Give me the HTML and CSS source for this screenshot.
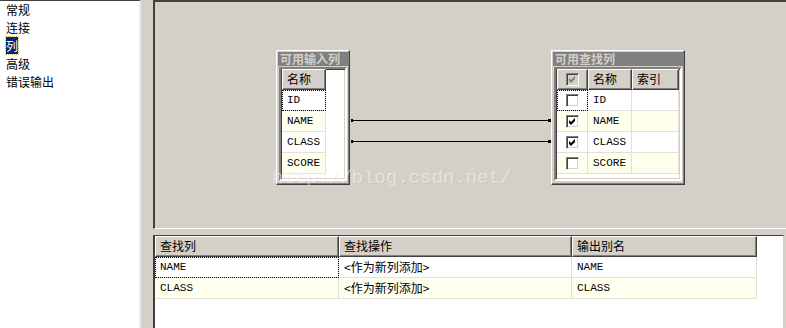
FILE: index.html
```html
<!DOCTYPE html>
<html lang="zh-CN">

<head>
    <meta charset="UTF-8">
    <title>查找转换编辑器 - 列</title>
    <link rel="stylesheet" href="styles.css">
</head>

<body>
    <div class="app">
        <ul class="nav">
            <li>常规</li>
            <li>连接</li>
            <li><span class="selecionado">列</span></li>
            <li>高级</li>
            <li>错误输出</li>
        </ul>

        <div class="principal">
            <div class="canvas">
                <!-- caixa das colunas de entrada -->
                <div class="caixa caixa-entrada">
                    <div class="caixa-titulo">可用输入列</div>
                    <div class="lista">
                        <div class="linha">
                            <div class="cab cel-nome">名称</div>
                        </div>
                        <div class="linha">
                            <div class="cel cel-nome foco">ID</div>
                        </div>
                        <div class="linha amarela">
                            <div class="cel cel-nome">NAME</div>
                        </div>
                        <div class="linha">
                            <div class="cel cel-nome">CLASS</div>
                        </div>
                        <div class="linha amarela">
                            <div class="cel cel-nome">SCORE</div>
                        </div>
                    </div>
                </div>

                <!-- caixa das colunas de pesquisa -->
                <div class="caixa caixa-pesquisa">
                    <div class="caixa-titulo">可用查找列</div>
                    <div class="lista">
                        <div class="linha">
                            <div class="cab cel-check"><span class="check cinza marcado"><svg viewBox="0 0 9 9"><polygon points="1,3 3,5 7,1 7,4 3,8 1,6" /></svg></span></div>
                            <div class="cab cel-nome2">名称</div>
                            <div class="cab cel-indice">索引</div>
                        </div>
                        <div class="linha">
                            <div class="cel cel-check foco"><span class="check"></span></div>
                            <div class="cel cel-nome2">ID</div>
                            <div class="cel cel-indice"></div>
                        </div>
                        <div class="linha amarela">
                            <div class="cel cel-check"><span class="check marcado"><svg viewBox="0 0 9 9"><polygon points="1,3 3,5 7,1 7,4 3,8 1,6" /></svg></span></div>
                            <div class="cel cel-nome2">NAME</div>
                            <div class="cel cel-indice"></div>
                        </div>
                        <div class="linha">
                            <div class="cel cel-check"><span class="check marcado"><svg viewBox="0 0 9 9"><polygon points="1,3 3,5 7,1 7,4 3,8 1,6" /></svg></span></div>
                            <div class="cel cel-nome2">CLASS</div>
                            <div class="cel cel-indice"></div>
                        </div>
                        <div class="linha amarela">
                            <div class="cel cel-check"><span class="check"></span></div>
                            <div class="cel cel-nome2">SCORE</div>
                            <div class="cel cel-indice"></div>
                        </div>
                    </div>
                </div>

                <!-- ligacoes entre as colunas -->
                <svg class="ligacoes" width="631" height="224">
                    <line x1="196" y1="118.5" x2="394" y2="118.5" stroke="#000" />
                    <rect x="196" y="117" width="2" height="3" />
                    <rect x="393" y="117" width="3" height="3" />
                    <line x1="196" y1="139.5" x2="394" y2="139.5" stroke="#000" />
                    <rect x="196" y="138" width="2" height="3" />
                    <rect x="393" y="138" width="3" height="3" />
                </svg>

                <div class="marca-dagua">http://blog.csdn.net/</div>
            </div>

            <div class="grade">
                <div class="grade-linha">
                    <div class="grade-cab col1">查找列</div>
                    <div class="grade-cab col2">查找操作</div>
                    <div class="grade-cab col3">输出别名</div>
                </div>
                <div class="grade-linha">
                    <div class="grade-cel col1 mono foco">NAME</div>
                    <div class="grade-cel col2">&lt;作为新列添加&gt;</div>
                    <div class="grade-cel col3 mono">NAME</div>
                </div>
                <div class="grade-linha amarela">
                    <div class="grade-cel col1 mono">CLASS</div>
                    <div class="grade-cel col2">&lt;作为新列添加&gt;</div>
                    <div class="grade-cel col3 mono">CLASS</div>
                </div>
            </div>
        </div>
    </div>
</body>

</html>
```

FILE: styles.css
```css
html, body {
    margin: 0;
    padding: 0;
}

body {
    width: 786px;
    height: 328px;
    overflow: hidden;
    background-color: #d4d0c8;
    font-family: "Noto Sans CJK SC", "Liberation Sans", sans-serif;
    font-size: 12px;
    color: #000;
}

.app {
    display: flex;
    height: 328px;
}

/* menu lateral */
.nav {
    width: 141px;
    flex-shrink: 0;
    margin: 0;
    padding: 0 0 0 6px;
    box-sizing: border-box;
    list-style: none;
    background-color: #fff;
    border-top: 1px solid #404040;
    border-right: 2px solid #ecebe7;
}

.nav li {
    height: 18px;
    line-height: 18px;
}

.selecionado {
    display: inline-block;
    height: 17px;
    line-height: 17px;
    background-color: #0a246a;
    color: #fff;
    outline: 1px dotted #c8b060;
}

.principal {
    flex: 1;
    margin-left: 12px;
    display: flex;
    flex-direction: column;
    gap: 6px;
}

/* area do diagrama */
.canvas {
    position: relative;
    height: 229px;
    box-sizing: border-box;
    border-top: 2px solid #404040;
    border-left: 2px solid #404040;
    border-bottom: 1px solid #fff;
    background-color: #d4d0c8;
}

.caixa {
    position: absolute;
    top: 48px;
    height: 135px;
    box-sizing: border-box;
    display: flex;
    flex-direction: column;
    padding: 1px;
    border: 1px solid;
    border-color: #fff #404040 #404040 #fff;
    box-shadow: inset -1px -1px #808080;
    background-color: #d4d0c8;
}

.caixa-entrada {
    left: 121px;
    width: 74px;
}

.caixa-pesquisa {
    left: 396px;
    width: 134px;
}

.caixa-titulo {
    height: 14px;
    line-height: 14px;
    padding-left: 2px;
    background-color: #808080;
    color: #d4d0c8;
    font-weight: bold;
    white-space: nowrap;
}

.lista {
    flex: 1;
    margin: 1px 1px 2px 1px;
    border: 2px solid;
    border-color: #808080 #fff #fff #808080;
    box-shadow: inset 1px 1px #404040, inset -1px -1px #d4d0c8;
    background-color: #fff;
    padding: 0 0 0 1px;
}

.linha {
    display: flex;
    height: 21px;
}

.cab {
    box-sizing: border-box;
    height: 21px;
    line-height: 18px;
    padding-left: 4px;
    background-color: #d4d0c8;
    border: 1px solid;
    border-color: #fff #404040 #404040 #fff;
    box-shadow: inset -1px -1px #808080;
}

.cel {
    box-sizing: border-box;
    height: 21px;
    line-height: 20px;
    padding-left: 5px;
    border-right: 1px solid #e4e0d8;
    border-bottom: 1px solid #e4e0d8;
    font-family: "Liberation Mono", monospace;
    font-size: 11px;
}

.amarela .cel,
.amarela .grade-cel {
    background-color: #ffffee;
}

.foco {
    outline: 1px dotted #000;
    outline-offset: -1px;
}

.cel-nome {
    width: 44px;
}

.cel-check {
    width: 31px;
    padding-left: 0;
    display: flex;
    align-items: center;
    justify-content: center;
}

.cel-nome2 {
    width: 44px;
}

.cel-indice {
    width: 47px;
}

.check {
    display: block;
    width: 13px;
    height: 13px;
    box-sizing: border-box;
    border: 1px solid;
    border-color: #808080 #fff #fff #808080;
    box-shadow: inset 1px 1px #404040, inset -1px -1px #d4d0c8;
    background-color: #fff;
    padding: 1px;
}

.check svg {
    display: block;
    width: 9px;
    height: 9px;
    fill: #000;
}

.check.cinza {
    background-color: #d4d0c8;
}

.check.cinza svg {
    fill: #808080;
}

.ligacoes {
    position: absolute;
    left: 0;
    top: 0;
}

.marca-dagua {
    position: absolute;
    left: 117px;
    top: 165px;
    font-family: "Liberation Mono", monospace;
    font-size: 19px;
    line-height: 22px;
    color: rgba(255, 255, 255, 0.45);
    text-shadow: 1px 1px rgba(0, 0, 0, 0.06);
    pointer-events: none;
}

/* grade inferior */
.grade {
    flex: 1;
    background-color: #fff;
    border-top: 1px solid #404040;
    border-left: 2px solid #404040;
    border-right: 1px solid #d4d0c8;
    margin-right: 2px;
}

.grade-linha {
    display: flex;
    height: 21px;
}

.grade-cab {
    box-sizing: border-box;
    height: 21px;
    line-height: 18px;
    padding-left: 4px;
    background-color: #d4d0c8;
    border: 1px solid;
    border-color: #fff #404040 #404040 #fff;
    box-shadow: inset -1px -1px #808080;
}

.grade-cel {
    box-sizing: border-box;
    height: 21px;
    line-height: 20px;
    padding-left: 5px;
    border-right: 1px solid #e4e0d8;
    border-bottom: 1px solid #e4e0d8;
}

.mono {
    font-family: "Liberation Mono", monospace;
    font-size: 11px;
}

.col1 {
    width: 184px;
}

.col2 {
    width: 233px;
}

.col3 {
    width: 185px;
}
```
